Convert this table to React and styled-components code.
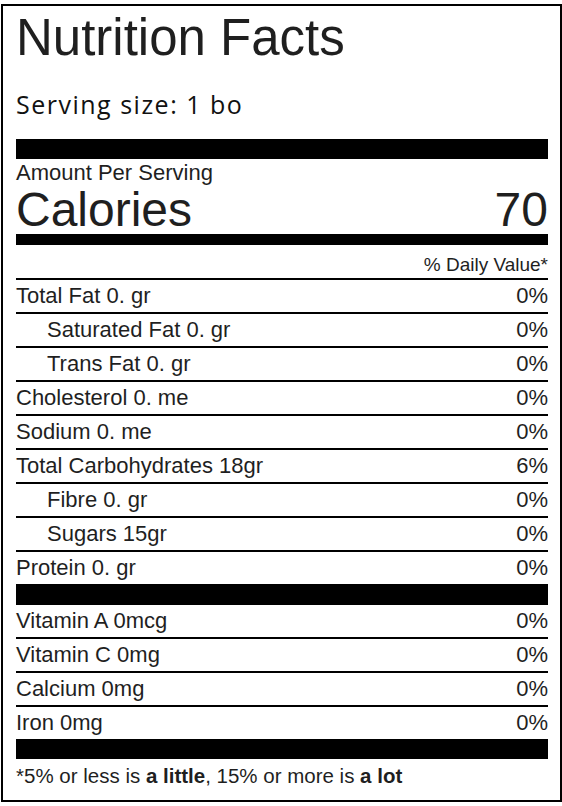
import React from 'react'
import styled, { createGlobalStyle } from 'styled-components'

const GlobalStyle = createGlobalStyle`
  body {
    margin: 0;
    background: #fff;
    font-family: "Liberation Sans", Arial, sans-serif;
    color: #1f1f1f;
  }
`

const Label = styled.div`
  box-sizing: border-box;
  width: 561px;
  height: 798px;
  margin: 4px 0 0 1px;
  border: 2px solid #000;
  padding: 6px 12px 10px 13px;
  display: flex;
  flex-direction: column;
`

const Title = styled.h1`
  margin: 0;
  font-size: 51px;
  line-height: 51px;
  font-weight: 400;
`

const Serving = styled.div`
  margin-top: 27px;
  font-family: "Open Sans", Lato, sans-serif;
  font-size: 25px;
  line-height: 28px;
  font-weight: 500;
  letter-spacing: 1.5px;
  color: #111;
`

const Bar = styled.div`
  height: ${(p) => p.$h}px;
  margin-top: ${(p) => p.$top || 0}px;
  background: #000;
`

const Amount = styled.div`
  margin-top: 3px;
  font-size: 22px;
  line-height: 22px;
`

const CaloriesRow = styled.div`
  display: flex;
  justify-content: space-between;
  margin: 4px 0 2px;
  font-size: 48px;
  line-height: 44px;
`

const DailyHeader = styled.div`
  padding: 8px 0 1px;
  border-bottom: 2px solid #000;
  text-align: right;
  font-size: 19px;
  line-height: 24px;
`

const Row = styled.div`
  display: flex;
  justify-content: space-between;
  height: 32px;
  padding-left: ${(p) => (p.$indent ? 31 : 0)}px;
  border-bottom: ${(p) => (p.$last ? 'none' : '2px solid #000')};
  font-size: 22px;
  line-height: 32px;
`

const Footnote = styled.p`
  margin: 5px 0 0;
  font-size: 20.5px;
  line-height: 24px;

  b {
    font-weight: 700;
  }
`

const nutrients = [
  { name: 'Total Fat 0. gr', dv: '0%' },
  { name: 'Saturated Fat 0. gr', dv: '0%', indent: true },
  { name: 'Trans Fat 0. gr', dv: '0%', indent: true },
  { name: 'Cholesterol 0. me', dv: '0%' },
  { name: 'Sodium 0. me', dv: '0%' },
  { name: 'Total Carbohydrates 18gr', dv: '6%' },
  { name: 'Fibre 0. gr', dv: '0%', indent: true },
  { name: 'Sugars 15gr', dv: '0%', indent: true },
  { name: 'Protein 0. gr', dv: '0%' },
]

const vitamins = [
  { name: 'Vitamin A 0mcg', dv: '0%' },
  { name: 'Vitamin C 0mg', dv: '0%' },
  { name: 'Calcium 0mg', dv: '0%' },
  { name: 'Iron 0mg', dv: '0%' },
]

function Rows({ items }) {
  return items.map((item, i) => (
    <Row key={item.name} $indent={item.indent} $last={i === items.length - 1}>
      <span>{item.name}</span>
      <span>{item.dv}</span>
    </Row>
  ))
}

export default function App() {
  return (
    <>
      <GlobalStyle />
      <Label>
        <Title>Nutrition Facts</Title>
        <Serving>Serving size: 1 bo</Serving>
        <Bar $h={20} $top={21} />
        <Amount>Amount Per Serving</Amount>
        <CaloriesRow>
          <span>Calories</span>
          <span>70</span>
        </CaloriesRow>
        <Bar $h={11} />
        <DailyHeader>% Daily Value*</DailyHeader>
        <Rows items={nutrients} />
        <Bar $h={21} />
        <Rows items={vitamins} />
        <Bar $h={20} />
        <Footnote>
          *5% or less is <b>a little</b>, 15% or more is <b>a lot</b>
        </Footnote>
      </Label>
    </>
  )
}
